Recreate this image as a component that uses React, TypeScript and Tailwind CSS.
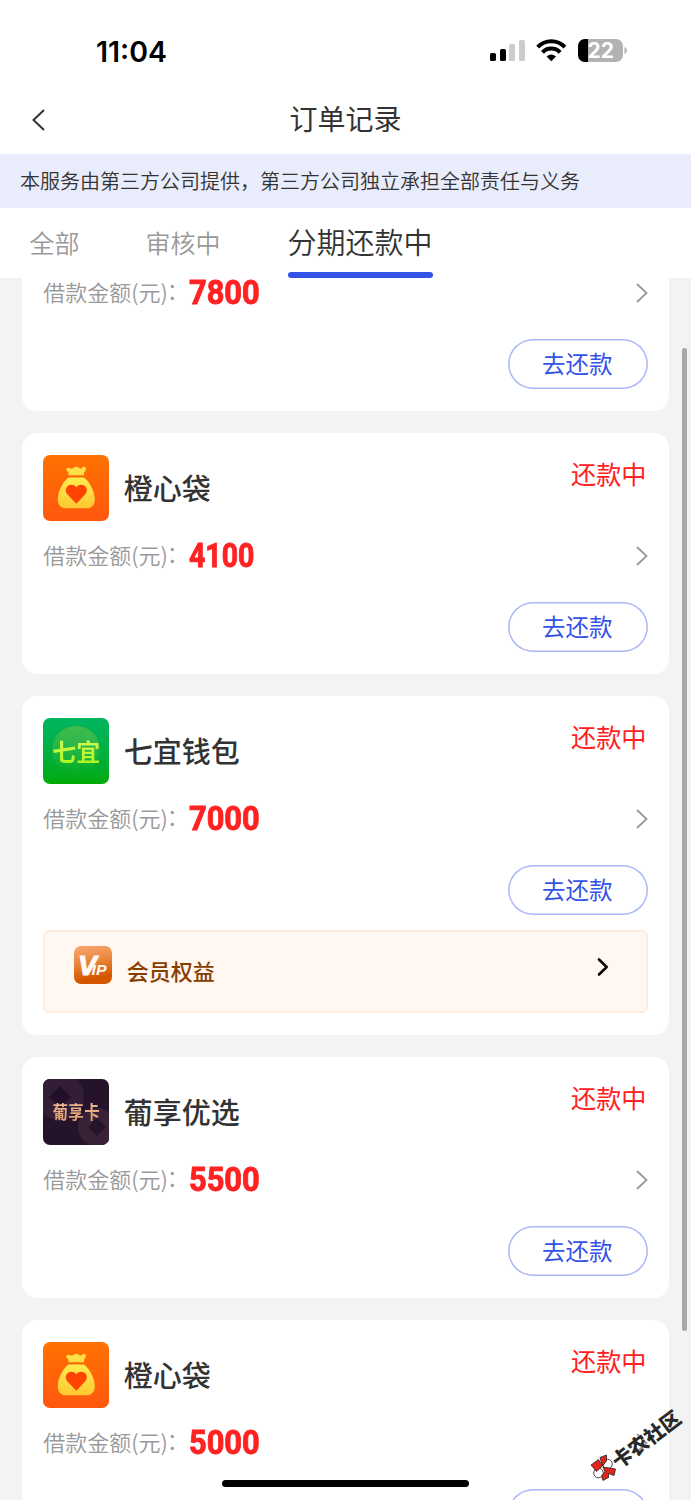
import React from "react";

type Logo = "bag" | "qiyi" | "puxiang";

interface Order {
  name?: string;
  logo?: Logo;
  amount: string;
  vip?: boolean;
}

const orders: Order[] = [
  { amount: "7800" },
  { name: "橙心袋", logo: "bag", amount: "4100" },
  { name: "七宜钱包", logo: "qiyi", amount: "7000", vip: true },
  { name: "葡享优选", logo: "puxiang", amount: "5500" },
  { name: "橙心袋", logo: "bag", amount: "5000" },
];

function BagLogo() {
  return (
    <svg viewBox="0 0 66 66" className="size-full">
      <defs>
        <linearGradient id="bagBg" x1="0" y1="0" x2="0" y2="1">
          <stop offset="0" stopColor="#ff7200" />
          <stop offset="1" stopColor="#ff570f" />
        </linearGradient>
        <linearGradient id="bagFill" x1="0" y1="0" x2="0" y2="1">
          <stop offset="0" stopColor="#ffec50" />
          <stop offset="1" stopColor="#ffc832" />
        </linearGradient>
      </defs>
      <rect width="66" height="66" fill="url(#bagBg)" />
      <path
        d="M25.500 20.300V17.600L22.800 14.800Q24.500 11.500 27.300 13.300Q28.900 14.500 30.500 12.800Q33.300 10.600 36 12.800Q37.600 14.600 39.300 12.600Q42 10.800 43 13.400Q43 15.500 41 17.600V20.300Z"
        fill="#ffe047"
      />
      <path
        d="M25.500 22.500H41C46 26.500 51.800 35.500 51.800 44.500C51.800 50 48.500 53.300 43.500 53.300H23C18 53.300 14.700 50 14.700 44.500C14.700 35.500 20.500 26.500 25.500 22.500Z"
        fill="url(#bagFill)"
      />
      <path
        d="M33.300 48.700L24.500 39.500C20.500 34.500 24.500 29.500 28.500 29.700C31 29.800 32.500 31 33.300 32.300C34.300 30.800 36 29.700 38.300 29.700C42.500 29.700 46.200 34.500 42 39.500Z"
        fill="#ff4300"
      />
    </svg>
  );
}

function QiyiLogo() {
  return (
    <div className="relative flex size-full items-center justify-center bg-linear-to-b from-[#00b660] to-[#02aa00]">
      <div className="absolute top-[8px] left-[9px] size-[48px] rounded-full bg-linear-to-b from-[#43bb4c] to-[#02aa00]/10" />
      <span className="relative bg-linear-to-b from-[#d9fa55] to-[#a5f500] bg-clip-text text-[24px] leading-[36px] font-bold text-transparent">
        七宜
      </span>
    </div>
  );
}

function PuxiangLogo() {
  return (
    <div className="relative flex size-full items-center justify-center bg-[#241329]">
      <svg viewBox="0 0 66 66" className="absolute inset-0 size-full">
        <circle cx="17" cy="17" r="24" fill="#321e35" />
        <path d="M17 7L28 18L17 29L6 18Z" fill="#211027" />
        <circle cx="54" cy="48" r="19" fill="#392238" />
        <path d="M54 39L63 48L54 57L45 48Z" fill="#241329" />
      </svg>
      <span className="relative -mt-[2px] scale-y-[1.150] bg-linear-to-b from-[#f7c4a0] to-[#d99468] bg-clip-text text-[15.500px] leading-[24px] font-bold tracking-[0.300px] text-transparent">
        葡享卡
      </span>
    </div>
  );
}

function AppLogo({ logo }: { logo: Logo }) {
  return (
    <div className="size-[66px] shrink-0 overflow-hidden rounded-[7px]">
      {logo === "bag" && <BagLogo />}
      {logo === "qiyi" && <QiyiLogo />}
      {logo === "puxiang" && <PuxiangLogo />}
    </div>
  );
}

function Amount({ value }: { value: string }) {
  const narrow = value.includes("1");
  return (
    <span
      className={
        "mt-[2px] origin-left font-[Roboto,sans-serif] text-[33.500px] leading-[40px] font-bold text-[#ff2222] [-webkit-text-stroke:0.900px_#ff2222] " +
        (narrow ? "scale-x-[0.850]" : "scale-x-[0.920]")
      }
    >
      {value}
    </span>
  );
}

function VipRow() {
  return (
    <div className="mt-[15px] flex h-[83px] items-start rounded-[7px] bg-[#fff7f0] pt-[16px] pr-[39px] pl-[31px] shadow-[inset_0_0_0_1.500px_#ffe8d9]">
      <div className="relative size-[38px] overflow-hidden rounded-[7px] bg-linear-[170deg] from-[#faa673] via-[#e8883c] via-40% to-[#d65600] to-80%">
        <svg viewBox="0 0 38 38" className="absolute inset-0 size-full" fill="#fffaf5">
          <text x="4" y="29" fontFamily="Liberation Sans, sans-serif" fontSize="28" fontWeight="700" fontStyle="italic" stroke="#fffaf5" strokeWidth="1.200">V</text>
          <text x="17.500" y="29" fontFamily="Liberation Sans, sans-serif" fontSize="14" fontWeight="700" fontStyle="italic" textLength="15" lengthAdjust="spacingAndGlyphs">IP</text>
        </svg>
      </div>
      <span className="mt-[8px] ml-[14.500px] text-[22px] leading-[32px] font-medium text-[#853d00]">会员权益</span>
      <svg viewBox="0 0 12 20" className="mt-[11px] ml-auto h-[20px] w-[12px]" fill="none" stroke="#0a0a0a" strokeWidth="2.600" strokeLinecap="round" strokeLinejoin="round">
        <path d="M2 2.500L9.700 10L2 17.500" />
      </svg>
    </div>
  );
}

function OrderCard({ order }: { order: Order }) {
  return (
    <div className="rounded-[15px] bg-white py-[21.500px] pr-[21.500px] pl-[21.250px]">
      <div className="flex h-[66px]">
        {order.logo && (
          <>
            <AppLogo logo={order.logo} />
            <span className="mt-[12px] ml-[14.500px] flex-1 text-[29px] leading-[40px] font-medium text-[#333]">{order.name}</span>
            <span className="mr-[1px] -mt-[1px] text-[25.200px] leading-[38px] text-[#ff2222]">还款中</span>
          </>
        )}
      </div>
      <div className="mt-[14.500px] flex h-[40px] items-center">
        <span className="-mt-[2px] w-[146px] text-[22px] leading-[40px] font-[350] whitespace-nowrap text-[#999]">
          借款金额(元)<span className="relative -top-[2px] -left-[1px]">：</span>
        </span>
        <div className="flex flex-1"><Amount value={order.amount} /></div>
        <svg viewBox="0 0 13 20" className="mt-[1px] h-[20px] w-[13px]" fill="none" stroke="#999" strokeWidth="1.800">
          <path d="M2 1L11.500 10L2 19" />
        </svg>
      </div>
      <div className="mt-[27px] flex justify-end">
        <div className="flex h-[50.250px] w-[139.500px] items-center justify-center rounded-full pr-[1px] pb-[2px] text-[23.500px] leading-[36px] text-[#3452e8] shadow-[inset_0_0_0_1.500px_#adb8f8]">
          去还款
        </div>
      </div>
      {order.vip && <VipRow />}
    </div>
  );
}

function StatusBar() {
  return (
    <div className="flex h-[86px] items-start pt-[36px] pr-[64px] pl-[96px]">
      <span className="mt-[1px] flex-1 font-[Inter,sans-serif] text-[28.500px] leading-[30px] font-semibold text-black">11:04</span>
      <svg viewBox="0 0 138 26" className="mt-[2px] h-[26px] w-[138px]">
        <rect x="1" y="15" width="6" height="8" rx="1.600" fill="#000" />
        <rect x="11" y="11" width="6" height="12" rx="1.600" fill="#000" />
        <rect x="20" y="6" width="6" height="17" rx="1.600" fill="#ccc" />
        <rect x="30" y="2" width="6" height="21" rx="1.600" fill="#ccc" />
        <g fill="none" stroke="#000" strokeWidth="4">
          <path d="M48.700 9.200A18.500 18.500 0 0 1 75.900 9.200" />
          <path d="M53.500 14.400A12 12 0 0 1 71.100 14.400" />
        </g>
        <path d="M57.600 18.600Q62.300 14.600 67 18.600L62.300 23.300Z" fill="#000" />
        <clipPath id="battery"><rect x="89" y="1" width="45" height="23" rx="7" /></clipPath>
        <g clipPath="url(#battery)">
          <rect x="89" y="1" width="45" height="23" fill="#b2b2b2" />
          <rect x="89" y="1" width="10" height="23" fill="#000" />
        </g>
        <path d="M135.500 9Q138 10 138 12.500Q138 15 135.500 16Z" fill="#b2b2b2" />
        <text x="98.500" y="20" fontFamily="Inter, sans-serif" fontSize="21" fontWeight="700" fill="#fff">22</text>
      </svg>
    </div>
  );
}

function Watermark() {
  return (
    <div className="absolute top-[1390px] left-[571px] h-[110px] w-[120px]">
      <svg viewBox="0 0 120 110" className="absolute inset-0 size-full">
        <g stroke="#222" strokeWidth="0.800">
          <circle cx="36.500" cy="74" r="4.800" fill="#fff" />
          <circle cx="27.500" cy="83" r="4.800" fill="#fff" />
          <path d="M20 75L27.500 69.500L31.500 76L25.500 81.500Z" fill="#e2231a" />
          <path d="M29 67.500L35.500 65L35.500 71L31.500 76Z" fill="#e2231a" />
          <path d="M32 77L44.500 79L43 85.500L37.500 83.500L37.500 87.500L32 90.500L30.500 86L34 82Z" fill="#e2231a" />
        </g>
      </svg>
      <span className="absolute top-[35px] left-[35px] flex -rotate-[37deg] text-[20px] leading-[28px] font-black whitespace-nowrap text-[#292929]">
        卡农社区
      </span>
    </div>
  );
}

export default function App() {
  return (
    <div className="relative flex h-[1500px] w-[691px] flex-col overflow-hidden bg-[#f3f3f3] font-['Noto_Sans_CJK_SC',sans-serif]">
      <header className="shrink-0 bg-white">
        <StatusBar />
        <div className="grid h-[68px] grid-cols-3 items-center">
          <svg viewBox="0 0 14 22" className="-mt-[1px] ml-[31px] h-[22px] w-[14px]" fill="none" stroke="#333" strokeWidth="2">
            <path d="M13 1L2.500 11L13 21" />
          </svg>
          <h1 className="-mt-[4px] text-center text-[28px] leading-[40px] text-[#333]">订单记录</h1>
        </div>
        <p className="h-[54px] bg-[#e9ecfb] pl-[20px] text-[20px] leading-[54px] font-[350] text-[#333]">
          本服务由第三方公司提供，第三方公司独立承担全部责任与义务
        </p>
        <nav className="flex h-[70px] pl-[29.500px] text-[25px] leading-[68px] font-[350] text-[#999]">
          <span>全部</span>
          <span className="ml-[66px]">审核中</span>
          <span className="ml-[67px] flex flex-col text-[29px] leading-[66px] text-[#333]">
            <span className="h-[64px]">分期还款中</span>
            <span className="h-[6px] rounded-full bg-[#3452e8]" />
          </span>
        </nav>
      </header>
      <main className="min-h-0 flex-1 overflow-hidden px-[22px]">
        <div className="-mt-[108px] flex flex-col gap-[22.250px]">
          {orders.map((order, i) => (
            <OrderCard key={i} order={order} />
          ))}
        </div>
      </main>
      <div className="absolute top-[348px] left-[682px] h-[983px] w-[4.500px] rounded-full bg-[#a8a8a8]" />
      <Watermark />
      <div className="absolute top-[1480px] left-[222px] h-[7px] w-[247px] rounded-full bg-black" />
    </div>
  );
}
